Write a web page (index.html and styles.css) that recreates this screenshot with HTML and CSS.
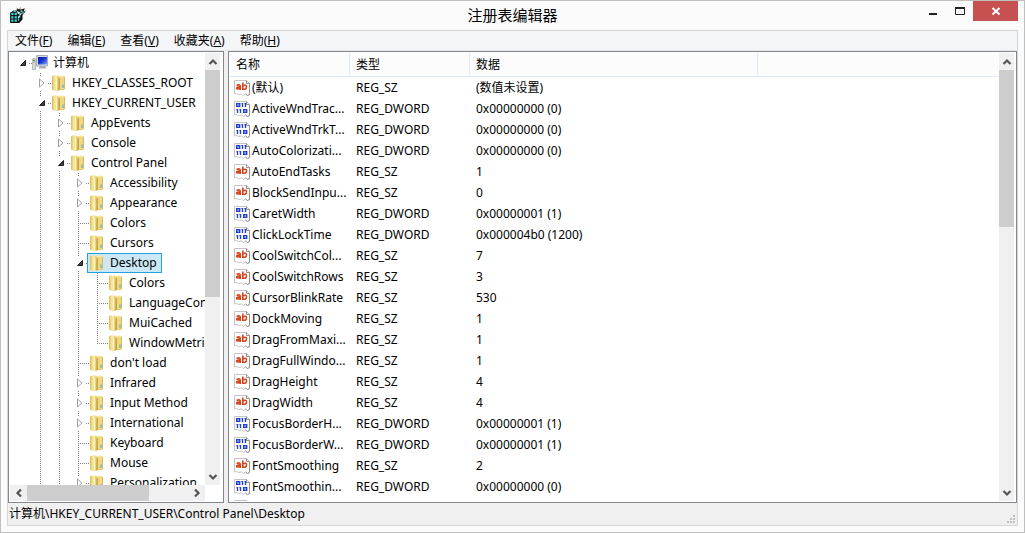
FILE: index.html
```
<!DOCTYPE html>
<html lang="zh-CN">
<head>
  <meta charset="UTF-8">
  <title>注册表编辑器</title>
  <link rel="stylesheet" href="styles.css">
</head>
<body>
  <!-- shared icons -->
  <svg class="sprite" aria-hidden="true">
    <defs>
      <linearGradient id="gold" x1="0" x2="1" y1="0" y2="0">
        <stop offset="0" stop-color="#d9b953"/>
        <stop offset="0.35" stop-color="#f3e195"/>
        <stop offset="0.7" stop-color="#f8eba9"/>
        <stop offset="1" stop-color="#dcbd55"/>
      </linearGradient>
      <linearGradient id="back" x1="0" x2="0" y1="0" y2="1">
        <stop offset="0" stop-color="#f7e9a4"/>
        <stop offset="1" stop-color="#d9b84e"/>
      </linearGradient>
      <linearGradient id="screen" x1="0" x2="1" y1="0" y2="1">
        <stop offset="0" stop-color="#0a18a0"/>
        <stop offset="0.5" stop-color="#1c38d8"/>
        <stop offset="1" stop-color="#86aaff"/>
      </linearGradient>
    </defs>
    <symbol id="folder" viewBox="0 0 16 16">
      <path d="M5 1l7-.5 1.500 1V14l-1 1H5z" fill="url(#back)"/>
      <path d="M8.500 2.500L14 1.500V14l-5.500 1z" fill="#edd887"/>
      <path d="M13.500 2v12" stroke="#d8bb57"/>
      <path d="M1 1.500L2 .5h4.500l1 1.500v14H4L1 14.500z" fill="url(#gold)"/>
      <path d="M7.500 3.500L9 2.500v12L7.500 16z" fill="#c9a640"/>
      <path d="M5.500 4v11" stroke="#fdf5c8"/>
      <path d="M12 9.500V13" stroke="#4aa3dc"/>
    </symbol>
    <symbol id="computer" viewBox="0 0 16 16">
      <path d="M4.500.5h11v10.500h-11z" fill="#d8dce2" stroke="#aab0b8"/>
      <path d="M6 2h9v7.500H6z" fill="url(#screen)"/>
      <path d="M8 11h5l1.500 2.500H6.500z" fill="#a9afb6"/>
      <path d="M0 4l1-1h2l1 1v11H0z" fill="#b9c0bf"/>
      <path d="M1 5.500h2" stroke="#32b432"/>
      <path d="M2 8v6" stroke="#eef2f2"/>
    </symbol>
    <symbol id="string" viewBox="0 0 16 16">
      <path d="M.5.500h12l3 3v11l-2 1-2-1.500-2 1.500-2-1.500-3 .5-2-1-2 .5z" fill="#fff" stroke="#c4c4c4"/>
      <path d="M15.500 3.500v11l-2 1-2-1.500M12.500.500v3h3" fill="none" stroke="#909090"/>
      <g fill="none" stroke="#d4451d" stroke-width="1.600">
        <path d="M2.500 5.400Q6.300 4 6.300 6.500v3.500M6.300 7.200Q2.600 6.800 2.600 8.300T6.300 8.300"/>
        <path d="M8.800 2.500V10M8.800 6q3.700-1.800 3.700 1T8.800 9.200"/>
      </g>
    </symbol>
    <symbol id="binary" viewBox="0 0 16 16">
      <path d="M.5.500h12l3 3v11l-2 1-2-1.500-2 1.500-2-1.500-3 .5-2-1-2 .5z" fill="#fff" stroke="#c4c4c4"/>
      <path d="M15.500 3.500v11l-2 1-2-1.500M12.500.500v3h3" fill="none" stroke="#909090"/>
      <g fill="none" stroke="#2340cf" stroke-width="1.400">
        <path d="M2.700 2.700h3v2.600h-3zM9.700 8.700h3v2.600h-3z"/>
        <path d="M8.500 2v4M11.500 2v4M3.500 8v4M6.500 8v4"/>
        <path d="M7.500 2.500h1M10.500 2.500h1M2.500 8.500h1M5.500 8.500h1" stroke-width="1"/>
      </g>
    </symbol>
    <symbol id="closed" viewBox="0 0 12 12">
      <path d="M3.500 2v8L8 6z" fill="#fff" stroke="#a0a0a0"/>
    </symbol>
    <symbol id="open" viewBox="0 0 12 12">
      <path d="M8.500 3.500v5h-5z" fill="#404040" stroke="#222"/>
    </symbol>
    <symbol id="chevron" viewBox="0 0 10 8">
      <path d="M1.500 6L5 2.500 8.500 6" fill="none" stroke="#555" stroke-width="2.200"/>
    </symbol>
  </svg>

  <div class="window">
    <header class="titlebar">
      <svg class="app-icon" viewBox="0 0 16 16" aria-hidden="true">
        <path d="M1 6l3-2h3V2l2 1 1-2 1 2 3-1-1 3 2-1-2 3-1 1v4l-3 3H1z" fill="#111"/>
        <path d="M2 6h2v2H2zM5 6h2v2H5zM2 9h2v2H2zM5 9h2v2H5zM2 12h2v2H2zM5 12h2v2H5zM8 11h1v2H8z" fill="#35d8d8"/>
        <path d="M4 4h2v1H4zM8 9l2-1v2l-2 1zM10 4h2v1h-2zM12 5h1v2h-1zM9 6l1 1-1 1z" fill="#85eeee"/>
        <path d="M7 5l2 1-1 1M10 2v1M11 6l-1 2" stroke="#e8ffff" fill="none"/>
      </svg>
      <h1>注册表编辑器</h1>
      <div class="controls">
        <button aria-label="最小化"><svg width="10" height="10"><path d="M1 8h8" stroke="#222" stroke-width="2"/></svg></button>
        <button aria-label="最大化"><svg width="10" height="10"><path d="M.5 2v6.500h9V2" fill="none" stroke="#222"/><path d="M0 2h10" stroke="#222" stroke-width="2"/></svg></button>
        <button class="close" aria-label="关闭"><svg width="10" height="10"><path d="M1.500 2l7 6.500M8.500 2l-7 6.500" stroke="#fff" stroke-width="2"/></svg></button>
      </div>
    </header>

    <div class="client">
      <nav class="menu">
        <button>文件(<u>F</u>)</button>
        <button>编辑(<u>E</u>)</button>
        <button>查看(<u>V</u>)</button>
        <button>收藏夹(<u>A</u>)</button>
        <button>帮助(<u>H</u>)</button>
      </nav>

      <main class="panes">
        <section class="pane keys">
          <div class="tree-area">
            <div class="tree-view">
              <ul class="tree">
                <li>
                  <div class="row"><button class="toggle" aria-label="折叠"><svg><use href="#open"/></svg></button><span class="node"><svg><use href="#computer"/></svg>计算机</span></div>
                  <ul>
                    <li><div class="row"><button class="toggle" aria-label="展开"><svg><use href="#closed"/></svg></button><span class="node"><svg><use href="#folder"/></svg>HKEY_CLASSES_ROOT</span></div></li>
                    <li class="more">
                      <div class="row"><button class="toggle" aria-label="折叠"><svg><use href="#open"/></svg></button><span class="node"><svg><use href="#folder"/></svg>HKEY_CURRENT_USER</span></div>
                      <ul>
                        <li><div class="row"><button class="toggle" aria-label="展开"><svg><use href="#closed"/></svg></button><span class="node"><svg><use href="#folder"/></svg>AppEvents</span></div></li>
                        <li><div class="row"><button class="toggle" aria-label="展开"><svg><use href="#closed"/></svg></button><span class="node"><svg><use href="#folder"/></svg>Console</span></div></li>
                        <li class="more">
                          <div class="row"><button class="toggle" aria-label="折叠"><svg><use href="#open"/></svg></button><span class="node"><svg><use href="#folder"/></svg>Control Panel</span></div>
                          <ul>
                            <li><div class="row"><button class="toggle" aria-label="展开"><svg><use href="#closed"/></svg></button><span class="node"><svg><use href="#folder"/></svg>Accessibility</span></div></li>
                            <li><div class="row"><button class="toggle" aria-label="展开"><svg><use href="#closed"/></svg></button><span class="node"><svg><use href="#folder"/></svg>Appearance</span></div></li>
                            <li><div class="row leaf"><span class="node"><svg><use href="#folder"/></svg>Colors</span></div></li>
                            <li><div class="row leaf"><span class="node"><svg><use href="#folder"/></svg>Cursors</span></div></li>
                            <li>
                              <div class="row"><button class="toggle" aria-label="折叠"><svg><use href="#open"/></svg></button><span class="node selected"><svg><use href="#folder"/></svg>Desktop</span></div>
                              <ul>
                                <li><div class="row leaf"><span class="node"><svg><use href="#folder"/></svg>Colors</span></div></li>
                                <li><div class="row leaf"><span class="node"><svg><use href="#folder"/></svg>LanguageConfiguration</span></div></li>
                                <li><div class="row leaf"><span class="node"><svg><use href="#folder"/></svg>MuiCached</span></div></li>
                                <li><div class="row leaf"><span class="node"><svg><use href="#folder"/></svg>WindowMetrics</span></div></li>
                              </ul>
                            </li>
                            <li><div class="row leaf"><span class="node"><svg><use href="#folder"/></svg>don't load</span></div></li>
                            <li><div class="row"><button class="toggle" aria-label="展开"><svg><use href="#closed"/></svg></button><span class="node"><svg><use href="#folder"/></svg>Infrared</span></div></li>
                            <li><div class="row"><button class="toggle" aria-label="展开"><svg><use href="#closed"/></svg></button><span class="node"><svg><use href="#folder"/></svg>Input Method</span></div></li>
                            <li><div class="row"><button class="toggle" aria-label="展开"><svg><use href="#closed"/></svg></button><span class="node"><svg><use href="#folder"/></svg>International</span></div></li>
                            <li><div class="row leaf"><span class="node"><svg><use href="#folder"/></svg>Keyboard</span></div></li>
                            <li><div class="row leaf"><span class="node"><svg><use href="#folder"/></svg>Mouse</span></div></li>
                            <li class="more"><div class="row"><button class="toggle" aria-label="展开"><svg><use href="#closed"/></svg></button><span class="node"><svg><use href="#folder"/></svg>Personalization</span></div></li>
                          </ul>
                        </li>
                      </ul>
                    </li>
                  </ul>
                </li>
              </ul>
            </div>
            <div class="scroll vertical">
              <button aria-label="向上"><svg><use href="#chevron"/></svg></button>
              <div class="track"><div class="thumb tree-thumb"></div></div>
              <button class="down" aria-label="向下"><svg><use href="#chevron"/></svg></button>
            </div>
          </div>
          <div class="scroll horizontal">
            <button class="left" aria-label="向左"><svg><use href="#chevron"/></svg></button>
            <div class="track"><div class="thumb wide-thumb"></div></div>
            <button class="right" aria-label="向右"><svg><use href="#chevron"/></svg></button>
          </div>
        </section>

        <section class="pane values">
          <div class="list">
            <table>
              <colgroup><col class="c-name"><col class="c-type"><col class="c-data"><col></colgroup>
              <thead>
                <tr><th>名称</th><th>类型</th><th>数据</th><th></th></tr>
              </thead>
              <tbody>
                <tr><td><svg><use href="#string"/></svg>(默认)</td><td>REG_SZ</td><td>(数值未设置)</td><td></td></tr>
                <tr><td><svg><use href="#binary"/></svg>ActiveWndTrac...</td><td>REG_DWORD</td><td>0x00000000 (0)</td><td></td></tr>
                <tr><td><svg><use href="#binary"/></svg>ActiveWndTrkT...</td><td>REG_DWORD</td><td>0x00000000 (0)</td><td></td></tr>
                <tr><td><svg><use href="#binary"/></svg>AutoColorizati...</td><td>REG_DWORD</td><td>0x00000000 (0)</td><td></td></tr>
                <tr><td><svg><use href="#string"/></svg>AutoEndTasks</td><td>REG_SZ</td><td>1</td><td></td></tr>
                <tr><td><svg><use href="#string"/></svg>BlockSendInpu...</td><td>REG_SZ</td><td>0</td><td></td></tr>
                <tr><td><svg><use href="#binary"/></svg>CaretWidth</td><td>REG_DWORD</td><td>0x00000001 (1)</td><td></td></tr>
                <tr><td><svg><use href="#binary"/></svg>ClickLockTime</td><td>REG_DWORD</td><td>0x000004b0 (1200)</td><td></td></tr>
                <tr><td><svg><use href="#string"/></svg>CoolSwitchCol...</td><td>REG_SZ</td><td>7</td><td></td></tr>
                <tr><td><svg><use href="#string"/></svg>CoolSwitchRows</td><td>REG_SZ</td><td>3</td><td></td></tr>
                <tr><td><svg><use href="#string"/></svg>CursorBlinkRate</td><td>REG_SZ</td><td>530</td><td></td></tr>
                <tr><td><svg><use href="#string"/></svg>DockMoving</td><td>REG_SZ</td><td>1</td><td></td></tr>
                <tr><td><svg><use href="#string"/></svg>DragFromMaxi...</td><td>REG_SZ</td><td>1</td><td></td></tr>
                <tr><td><svg><use href="#string"/></svg>DragFullWindo...</td><td>REG_SZ</td><td>1</td><td></td></tr>
                <tr><td><svg><use href="#string"/></svg>DragHeight</td><td>REG_SZ</td><td>4</td><td></td></tr>
                <tr><td><svg><use href="#string"/></svg>DragWidth</td><td>REG_SZ</td><td>4</td><td></td></tr>
                <tr><td><svg><use href="#binary"/></svg>FocusBorderH...</td><td>REG_DWORD</td><td>0x00000001 (1)</td><td></td></tr>
                <tr><td><svg><use href="#binary"/></svg>FocusBorderW...</td><td>REG_DWORD</td><td>0x00000001 (1)</td><td></td></tr>
                <tr><td><svg><use href="#string"/></svg>FontSmoothing</td><td>REG_SZ</td><td>2</td><td></td></tr>
                <tr><td><svg><use href="#binary"/></svg>FontSmoothin...</td><td>REG_DWORD</td><td>0x00000000 (0)</td><td></td></tr>
                <tr><td><svg><use href="#binary"/></svg></td><td></td><td></td><td></td></tr>
              </tbody>
            </table>
          </div>
          <div class="scroll vertical">
            <button aria-label="向上"><svg><use href="#chevron"/></svg></button>
            <div class="track"><div class="thumb list-thumb"></div></div>
            <button class="down" aria-label="向下"><svg><use href="#chevron"/></svg></button>
          </div>
        </section>
      </main>

      <footer class="status">
        <span>计算机\HKEY_CURRENT_USER\Control Panel\Desktop</span>
        <svg class="grip" width="8" height="8" aria-hidden="true"><path d="M6 0h2v2H6zM3 3h2v2H3zM6 3h2v2H6zM0 6h2v2H0zM3 6h2v2H3zM6 6h2v2H6z" fill="#bfbfbf"/></svg>
      </footer>
    </div>
  </div>
</body>
</html>
```
FILE: styles.css
```
* {
  box-sizing: border-box;
}
body {
  margin: 0;
  font-family: "Noto Sans", "Noto Sans CJK SC", sans-serif;
  font-size: 12px;
  line-height: 20px;
  color: #000;
}
button {
  margin: 0;
  padding: 0;
  border: none;
  background: none;
  font: inherit;
  color: inherit;
}
svg {
  display: block;
  flex: none;
}
.sprite {
  position: absolute;
  width: 0;
  height: 0;
}
.window {
  display: flex;
  flex-direction: column;
  height: 100vh;
  padding: 0 6px 6px;
  border: 1px solid #bfbfbf;
  background: #fbfbfb;
}

/* title bar */
.titlebar {
  display: grid;
  grid-template-columns: 1fr auto 1fr;
  height: 29px;
  flex: none;
}
.app-icon {
  width: 18px;
  height: 18px;
  margin: 5px 0 0 2px;
}
.titlebar h1 {
  margin: 0;
  font-size: 15px;
  font-weight: normal;
  line-height: 28px;
}
.controls {
  display: flex;
  justify-content: flex-end;
  align-items: flex-start;
}
.controls button {
  display: flex;
  align-items: center;
  justify-content: center;
  width: 27px;
  height: 20px;
}
.controls .close {
  width: 45px;
  background: #c75050;
}

.client {
  display: flex;
  flex-direction: column;
  flex: 1;
  min-height: 0;
  border: 1px solid #d5d5d5;
  background: #f0f0f0;
}
.menu {
  display: flex;
  gap: 15px;
  height: 20px;
  flex: none;
  padding-left: 7px;
  background: #f4f5f7;
  border-bottom: 1px solid #e6e6e6;
}
.menu button {
  height: 19px;
  line-height: 20px;
}

/* panes */
.panes {
  display: flex;
  gap: 4px;
  flex: 1;
  min-height: 0;
}
.pane {
  display: flex;
  min-width: 0;
  padding: 1px;
  border: 1px solid #828790;
  background: #fff;
}
.keys {
  flex: none;
  flex-direction: column;
  width: 216px;
}
.values {
  flex: 1;
}
.tree-area {
  display: flex;
  flex: 1;
  min-height: 0;
}
.tree-view {
  flex: 1;
  min-width: 0;
  overflow: hidden;
}

/* key tree */
.tree,
.tree ul {
  margin: 0;
  padding: 0;
  list-style: none;
}
.tree {
  padding-left: 3px;
}
.tree ul {
  padding-left: 19px;
}
.tree ul li {
  background: linear-gradient(#808080 50%, transparent 50%) 8px 0 / 1px 2px repeat-y;
}
.tree ul li:last-child:not(.more) {
  background: repeating-linear-gradient(#808080 0 1px, transparent 1px 2px) 8px 0 / 1px 10px no-repeat;
}
.row {
  display: flex;
  align-items: center;
  height: 20px;
  white-space: nowrap;
  background: repeating-linear-gradient(90deg, #808080 0 1px, transparent 1px 2px) 16px 10px / 3px 1px no-repeat;
}
.row.leaf {
  padding-left: 19px;
  background: repeating-linear-gradient(90deg, #808080 0 1px, transparent 1px 2px) 8px 10px / 11px 1px no-repeat;
}
.toggle {
  width: 12px;
  height: 14px;
  margin: 0 3px 0 4px;
  flex: none;
  background: #fff;
}
.toggle svg {
  width: 12px;
  height: 12px;
}
.node {
  display: flex;
  align-items: center;
  gap: 5px;
  height: 20px;
  margin-left: -2px;
  padding: 0 4px 0 1px;
  border: 1px solid transparent;
}
.node svg {
  width: 16px;
  height: 16px;
}
.node.selected {
  background: #cbe8f6;
  border-color: #26a0da;
}

/* scroll bars */
.scroll {
  display: flex;
  flex: none;
  background: #f0f0f0;
}
.scroll.vertical {
  flex-direction: column;
  width: 15px;
  margin-right: 2px;
}
.values .scroll.vertical {
  margin-right: 1px;
}
.scroll.horizontal {
  height: 16px;
  margin-right: 17px;
}
.scroll button {
  display: flex;
  align-items: center;
  justify-content: center;
  width: 15px;
  height: 17px;
  flex: none;
}
.scroll.horizontal button {
  width: 17px;
  height: 15px;
}
.scroll svg {
  width: 10px;
  height: 8px;
}
.down svg {
  transform: rotate(180deg);
}
.left svg {
  transform: rotate(-90deg);
}
.right svg {
  transform: rotate(90deg);
}
.track {
  flex: 1;
  min-height: 0;
}
.thumb {
  height: 100%;
  background: #cdcdcd;
}
.tree-thumb {
  height: 57%;
}
.list-thumb {
  height: 38%;
}
.wide-thumb {
  width: 76%;
}

/* value list */
.list {
  flex: 1;
  min-width: 0;
  overflow: hidden;
}
table {
  width: 100%;
  table-layout: fixed;
  border-collapse: separate;
  border-spacing: 0;
}
.c-name,
.c-type {
  width: 120px;
}
.c-data {
  width: 288px;
}
th {
  height: 24px;
  padding: 0 6px;
  border-right: 1px solid #e0ecfb;
  border-bottom: 1px solid #e0ecfb;
  background: #fcfcfc;
  font-weight: normal;
  text-align: left;
}
th:last-child {
  border-right: none;
}
td {
  height: 21px;
  padding: 0 6px;
  white-space: nowrap;
}
td:first-child {
  padding: 0 0 0 4px;
}
td svg {
  display: inline-block;
  width: 16px;
  height: 16px;
  margin-right: 2px;
  vertical-align: middle;
}

.status {
  display: flex;
  justify-content: space-between;
  align-items: center;
  height: 22px;
  flex: none;
  padding-left: 1px;
}
.grip {
  align-self: flex-end;
  margin: 0 2px 2px 0;
}
```
